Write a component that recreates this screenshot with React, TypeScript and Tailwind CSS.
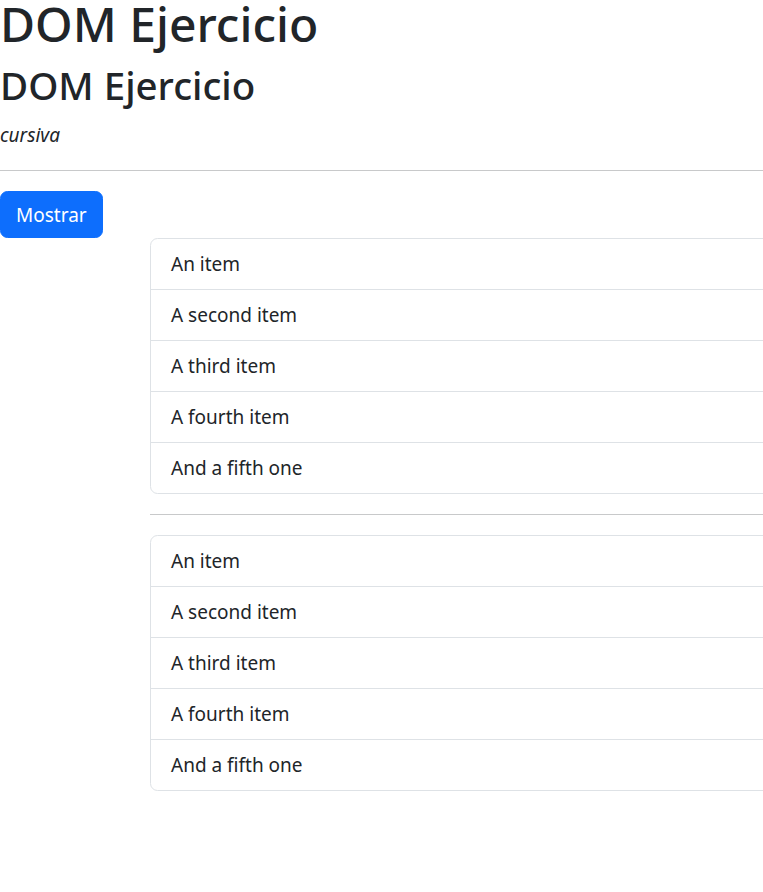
import React from "react";

const items = ["An item", "A second item", "A third item", "A fourth item", "And a fifth one"];

function List() {
  return (
    <ul className="w-full ml-[150px] shrink-0 border border-[#dee2e6] rounded-[7.5px] flex flex-col">
      {items.map((t, i) => (
        <li
          key={t}
          className={
            "px-[20px] py-[10px] leading-[30px] text-[19px] text-[#212529] " +
            (i > 0 ? "border-t border-[#dee2e6]" : "")
          }
        >
          {t}
        </li>
      ))}
    </ul>
  );
}

export default function App() {
  return (
    <div
      className="w-full overflow-hidden bg-white text-[#212529] min-h-[892px]"
      style={{ fontFamily: '"Noto Sans", "Open Sans", sans-serif' }}
    >
      <h1 className="text-[48px] leading-[48px] font-medium mb-[14px]">DOM Ejercicio</h1>
      <h2 className="text-[38.5px] leading-[46px] font-medium mb-[12px]">DOM Ejercicio</h2>
      <p className="text-[19px] leading-[30px] italic">cursiva</p>
      <hr className="my-[20px] border-t border-[#c8c9ca]" />
      <button className="bg-[#0d6efd] text-white text-[19px] leading-[30px] px-[15px] py-[7.5px] rounded-[7.5px] border border-[#0d6efd]">
        Mostrar
      </button>
      <div className="flex">
        <List />
      </div>
      <div className="flex">
        <hr className="w-full ml-[150px] shrink-0 my-[20px] border-t border-[#c8c9ca]" />
      </div>
      <div className="flex">
        <List />
      </div>
    </div>
  );
}
